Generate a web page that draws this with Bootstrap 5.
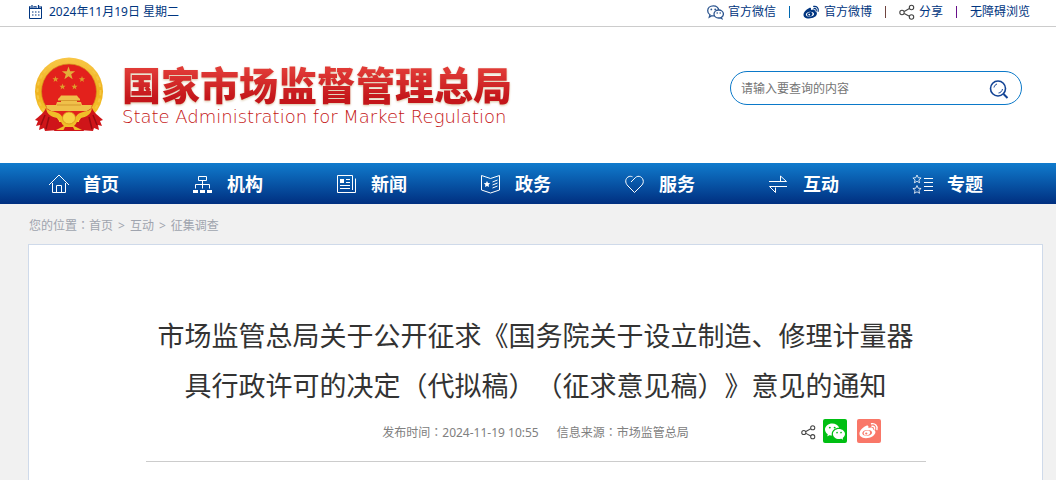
<!DOCTYPE html>
<html lang="zh-CN">
<head>
<meta charset="utf-8">
<meta name="viewport" content="width=device-width, initial-scale=1">
<title>国家市场监督管理总局</title>
<link rel="stylesheet" href="https://cdn.jsdelivr.net/npm/bootstrap@5.3.0/dist/css/bootstrap.min.css">
<style>
  :root { --navy: #003580; --line-blue: #0b79c9; }
  body { font: 12px/24px "Noto Sans", "Noto Sans CJK SC", sans-serif; color: #333; background: #f1f1f1; text-spacing-trim: space-all; }
  a { color: inherit; text-decoration: none; }
  svg { display: block; flex: none; }
  .mid-punct { font-family: "Noto Sans CJK TC", sans-serif; line-height: 1; }
  .site-wrap { padding-left: 28px; padding-right: 13px; }
  .top-strip { color: var(--navy); border-bottom: 1px solid #ccc; padding-bottom: 2px; }
  .today { gap: 7px; }
  .top-links { padding-right: 13px; gap: 13px; }
  .vbar { width: 1px; height: 12px; background: #0068b0; }
  .vbar-b { background: #70453f; }
  .vbar-c { background: #68108a; }
  .masthead { height: 136px; padding-left: 34px; padding-right: 34px; }
  .brand { gap: 18px; }
  .brand-cn { font: 900 39px/44px "Noto Sans CJK SC", sans-serif; background: linear-gradient(#e03a36 20%, #c4161a 85%); -webkit-background-clip: text; background-clip: text; color: transparent; filter: drop-shadow(0 1px 1px #d9c3a2); }
  .brand-en { font: 200 18px/24px "DejaVu Sans", sans-serif; color: #c41414; }
  .search-box { width: 292px; height: 34px; border: 1px solid var(--line-blue); border-radius: 17px; padding: 0 12px 0 10px; margin-bottom: 14px; }
  .search-box input { border: 0; outline: 0; background: none; padding: 2px 0 0; min-width: 0; color: #555; }
  .search-box input::placeholder { color: #757575; }
  .search-box button { border: 0; background: none; padding: 2px 0 0; }
  .main-nav { background: linear-gradient(#107bcd, #002f80); height: 41px; padding-left: 48px; }
  .main-nav a { flex: 1 1 0; gap: 13px; color: #fff; font: 700 18px/41px "Noto Sans CJK SC", sans-serif; }
  .main-nav svg, .line-art { fill: none; stroke: currentColor; }
  .crumbs { color: #9fa4ae; padding: 10px 0 6px 1px; gap: 5px; }
  .article-box { border: 1px solid #cfdaea; background: #fff; padding-top: 66px; min-height: 240px; }
  .article-inner { max-width: 780px; margin: 0 auto; }
  .article-inner h1 { font-size: 27px; line-height: 50px; font-weight: 400; color: #333; margin: 0 0 8px; }
  .meta-row { display: grid; grid-template-columns: 1fr auto 1fr; color: #808080; border-bottom: 1px solid #ccc; padding-bottom: 18px; }
  .meta-info { grid-column: 2; gap: 18px; padding-top: 4px; line-height: 20px; }
  .share-set { padding-right: 45px; gap: 10px; }
  .share-plain { margin-right: -3px; padding-top: 2px; }
  .share-tile { width: 24px; height: 24px; border-radius: 2px; color: #fff; }
  .tile-wechat { background: #00bf13; }
  .tile-weibo { background: #f97768; }
</style>
</head>
<body>
<svg width="0" height="0" class="position-absolute" aria-hidden="true">
  <symbol id="wechat" viewBox="0 0 16 16"><path d="M11.176 14.429c-2.665 0-4.826-1.8-4.826-4.018 0-2.22 2.159-4.02 4.824-4.02S16 8.191 16 10.411c0 1.21-.65 2.301-1.666 3.036a.32.32 0 0 0-.12.366l.218.81a.6.6 0 0 1 .029.117.166.166 0 0 1-.162.162.2.2 0 0 1-.092-.03l-1.057-.61a.5.5 0 0 0-.256-.074.5.5 0 0 0-.142.021 5.7 5.7 0 0 1-1.576.22M9.064 9.542a.647.647 0 1 0 .557-1 .645.645 0 0 0-.646.647.6.6 0 0 0 .09.353Zm3.232.001a.646.646 0 1 0 .546-1 .645.645 0 0 0-.644.644.63.63 0 0 0 .098.356"/><path d="M0 6.826c0 1.455.781 2.765 2.001 3.656a.385.385 0 0 1 .143.439l-.161.6-.1.373a.5.5 0 0 0-.032.14.19.19 0 0 0 .193.193q.06 0 .111-.029l1.268-.733a.6.6 0 0 1 .308-.088q.088 0 .171.025a6.8 6.8 0 0 0 1.625.26 4.5 4.5 0 0 1-.177-1.251c0-2.936 2.785-5.02 5.824-5.02l.15.002C10.587 3.429 8.392 2 5.796 2 2.596 2 0 4.16 0 6.826m4.632-1.555a.77.77 0 1 1-1.54 0 .77.77 0 0 1 1.54 0m3.875 0a.77.77 0 1 1-1.54 0 .77.77 0 0 1 1.54 0"/></symbol>
  <symbol id="weibo" viewBox="0 0 18 16">
    <path fill="currentColor" fill-rule="evenodd" d="M6.6 3.2C8 2.6 8.900 3.400 8.400 5.300c2-.9 4.500-.9 4.300 1.400 3.300.8 2.400 4.400-.7 6.200-3.300 2-8.300 2.200-10.700-.1C-.9 10.400 1.100 5.700 6.600 3.200ZM7.200 7.200C4.800 7.400 2.800 8.800 3 10.300s2.200 2.200 4.600 2 4.300-1.500 4.100-3-2.300-2.300-4.500-2.100Z"/>
    <path fill="currentColor" fill-rule="evenodd" d="M7.200 7.600c-2 .2-3.200 1.400-3 2.700s1.800 1.900 3.400 1.600 2.600-1.500 2.400-2.700-1.300-1.800-2.800-1.600ZM6.500 9.300a1 .9 0 1 0 .1 1.800 1 .9 0 0 0-.1-1.800Z"/>
    <path fill="none" stroke="currentColor" stroke-width="1.300" stroke-linecap="round" d="M11.300 1.500c3-.7 5.700 1.800 4.800 5.200M11.700 3.700c1.600-.3 2.700.8 2.300 2.500"/>
  </symbol>
  <symbol id="share" viewBox="0 0 16 16"><g fill="none" stroke="#444" stroke-width="1.100"><circle cx="3" cy="8.500" r="2.200"/><circle cx="12.500" cy="3.500" r="2.200"/><circle cx="12.500" cy="13" r="2.200"/><path d="M5.200 7.500l5.200-3M5.200 9.500l5.200 2.700"/></g></symbol>
</svg>

<div class="bg-white">
  <div class="top-strip site-wrap d-flex justify-content-between">
    <div class="today d-flex align-items-center">
      <svg width="14" height="16" class="line-art" viewBox="0 0 14 16"><path d="M1.500 2.500v12h12v-12M1 4.500h13" /><path d="M1 3h2M5 3h4M11 3h2.500" /><path d="M4 1v3M10.500 1v3M7 2v1" stroke-width="1.200"/><path d="M4 8h8M4 11h8" stroke-dasharray="1.500 1.500"/></svg>
      <span>2024年11月19日 星期二</span>
    </div>
    <div class="top-links d-flex align-items-center">
      <a href="#" class="d-flex align-items-center gap-1">
        <svg width="17" height="16" viewBox="0 0 17 16"><g fill="#fff" stroke="#2d5690" stroke-width="1.300"><path d="M3 10.800l-.7 2.400 2.500-1.400c5 .8 7.600-1.800 7.200-5C11.500 3.500 9 1.800 6.300 1.800 3 1.800.7 4 .7 6.800c0 1.700.9 3.200 2.300 4Z"/><path d="M14.500 13.200c1.300-.8 1.900-2 1.900-3.200 0-2.300-2.200-4-4.700-4S7 7.700 7 10s2 4 4.700 4c.5 0 1 0 1.500-.2l1.700.9Z"/></g><g fill="#2d5690"><circle cx="4.300" cy="5.400" r=".9"/><circle cx="8.200" cy="5.400" r=".9"/><circle cx="10.200" cy="9" r=".8"/><circle cx="13.200" cy="9" r=".8"/></g></svg>
        官方微信</a>
      <span class="vbar"></span>
      <a href="#" class="d-flex align-items-center gap-1"><svg width="17" height="15"><use href="#weibo"/></svg>官方微博</a>
      <span class="vbar vbar-b"></span>
      <a href="#" class="d-flex align-items-center gap-1"><svg width="16" height="16"><use href="#share"/></svg>分享</a>
      <span class="vbar vbar-c"></span>
      <a href="#">无障碍浏览</a>
    </div>
  </div>

  <header class="masthead d-flex align-items-center justify-content-between">
    <a href="#" class="brand d-flex align-items-center">
      <svg width="70" height="76" viewBox="0 0 70 76">
        <defs><linearGradient id="gold" x2="0" y2="1"><stop stop-color="#f9c648"/><stop offset=".5" stop-color="#eeb21d"/><stop offset="1" stop-color="#f8cf36"/></linearGradient></defs>
        <circle cx="35" cy="34.500" r="34" fill="url(#gold)"/>
        <circle cx="35" cy="34.500" r="31.500" fill="none" stroke="#f5c640" stroke-width="2" stroke-dasharray="4 3"/>
        <circle cx="35" cy="34.500" r="27.500" fill="#e3211c" stroke="#d2941c" stroke-width=".7"/>
        <path fill="#e2b03a" d="M34.500 9.500l1.700 4.700 5 .1-4 3 1.400 4.900-4.100-2.900-4.100 2.900 1.400-4.900-4-3 5-.1Z"/>
        <path fill="#dd9f2b" d="M21.500 19l.8 2.200 2.300.1-1.800 1.400.6 2.200-1.900-1.300-1.900 1.300.6-2.200-1.800-1.400 2.300-.1ZM48 19l.8 2.200 2.300.1-1.800 1.400.6 2.200-1.900-1.300-1.900 1.300.6-2.200-1.800-1.400 2.300-.1ZM28.500 26.500l.8 2.200 2.300.1-1.800 1.400.6 2.200-1.900-1.300-1.900 1.300.6-2.200-1.800-1.400 2.300-.1ZM40.500 26.500l.8 2.200 2.300.1-1.800 1.400.6 2.200-1.900-1.300-1.900 1.300.6-2.200-1.800-1.400 2.300-.1Z"/>
        <path fill="#efc04a" d="M26 40l1-1.500h16l1 1.500 2 2v1.500H24V42ZM27 43h16v2H27ZM23 45h24l1 3h10l-2 6H14l-2-6h10Z"/>
        <path stroke="#ca8820" stroke-width=".7" d="M24 43.500h22M23 48h24"/>
        <path fill="#cf1519" d="M12 51c-2 5-7 8-11 12l3 1-2 5 4-1-1 5 5-2 1 3 14-1V64l-6-9ZM58 51c2 5 7 8 11 12l-3 1 2 5-4-1 1 5-5-2-1 3-14-1V64l6-9Z"/>
        <path fill="none" stroke="#980b10" stroke-width="1.500" d="M11 58l-4 10M15 60l-3 12M59 58l4 10M55 60l3 12"/>
        <path fill="#cf1519" d="M23 65h24l3 9H20Z"/>
        <path fill="#f0bd28" d="M12 51c4 4 8 3 12 5 3 1 4 4 5 5l3-5h6l3 5c1-1 2-4 5-5 4-2 8-1 12-5-1 7-6 9-11 10-4 1-4 6-7 8l8 4H22l8-4c-3-2-3-7-7-8-5-1-10-3-11-10Z"/>
        <ellipse cx="35" cy="61" rx="6.500" ry="6" fill="#f8d244" stroke="#d8961a" stroke-width=".8"/>
        <path fill="#cf1519" d="M29 74l2-4h8l2 4Z"/>
      </svg>
      <span class="d-flex flex-column"><span class="brand-cn">国家市场监督管理总局</span><span class="brand-en">State Administration for Market Regulation</span></span>
    </a>
    <form class="search-box d-flex align-items-center">
      <input type="search" class="flex-fill" placeholder="请输入要查询的内容" aria-label="请输入要查询的内容">
      <button type="button" aria-label="搜索"><svg width="20" height="20" viewBox="0 0 20 20" fill="none" stroke="#124395"><circle cx="9" cy="9.500" r="7.500" stroke-width="1.600"/><path d="M14.500 15l4 4" stroke-width="2"/><path d="M5 8.500c.5-2 1.500-3 3-3.500M9.500 14c2-.3 3.500-1.500 4-4"/></svg></button>
    </form>
  </header>
</div>

<nav class="main-nav d-flex">
  <a href="#" class="d-flex align-items-center"><svg width="22" height="20" viewBox="0 0 22 20"><path d="M1 11L11 1l10 10M4.500 9v9.500h13V9M8.500 18.500v-7h5v7"/></svg>首页</a>
  <a href="#" class="d-flex align-items-center"><svg width="22" height="20" viewBox="0 0 22 20"><path d="M6.500 2.500h8v4h-8ZM10.500 6.500v8M3.500 14.500v-4h14v4"/><path d="M1 17.500h5M8 17.500h5M15 17.500h5" stroke-width="3"/></svg>机构</a>
  <a href="#" class="d-flex align-items-center"><svg width="22" height="20" viewBox="0 0 22 20"><path d="M16.500 16V1.500h-15v17h18V4.500M4 11.500h10M4 14.500h10M10 5.500h4M10 8.500h4"/><path fill="#fff" stroke="none" d="M4 5h4v4H4Z"/></svg>新闻</a>
  <a href="#" class="d-flex align-items-center"><svg width="22" height="20" viewBox="0 0 22 20"><path d="M1.500 1.500l9 3 9-3V16l-9 3-9-3ZM12.500 8l5-2M12.500 11l5-2M12.500 14l5-2"/><path fill="#fff" stroke="none" d="M7 7l1 2 2.200.3-1.600 1.500.4 2.200-2-1-2 1 .4-2.200-1.600-1.500L6 9Z"/></svg>政务</a>
  <a href="#" class="d-flex align-items-center"><svg width="22" height="20" viewBox="0 0 22 20"><path d="M7 8l4.300-4.300c3.200-3.200 8-.5 8 3.800 0 2-1 3.300-2.300 4.500L10.500 18.500 4 12C.5 8.500 1.500 4.500 4 3c1.600-1 3.200-.8 4.500-.2"/></svg>服务</a>
  <a href="#" class="d-flex align-items-center"><svg width="22" height="20" viewBox="0 0 22 20"><path d="M1 7.500h17.500l-6-5.500v5M19 12.500H1.500l6 6v-5"/></svg>互动</a>
  <a href="#" class="d-flex align-items-center"><svg width="22" height="20" viewBox="0 0 22 20"><path d="M12 4.500h9M12 8.500h9M12 12.500h9M12 16.500h9"/><path stroke-width=".8" d="M5 1l1.200 2.700 2.900.3-2.200 1.900.7 2.900L5 7.300 2.400 8.800l.7-2.900L.9 4l2.900-.3ZM5 11.500l1.200 2.700 2.900.3-2.200 1.900.7 2.900L5 17.800l-2.600 1.500.7-2.900-2.200-1.900 2.900-.3Z"/></svg>专题</a>
</nav>

<main class="site-wrap">
  <div class="crumbs d-flex"><span>您的位置<span class="mid-punct" lang="zh-TW">：</span><a href="#">首页</a></span><span>&gt;</span><a href="#">互动</a><span>&gt;</span><a href="#">征集调查</a></div>
  <article class="article-box">
    <div class="article-inner">
      <h1 class="text-center">市场监管总局关于公开征求《国务院关于设立制造、修理计量器具行政许可的决定（代拟稿）（征求意见稿）》意见的通知</h1>
      <div class="meta-row">
        <div class="meta-info d-flex"><span>发布时间<span class="mid-punct" lang="zh-TW">：</span>2024-11-19 10:55</span><span>信息来源<span class="mid-punct" lang="zh-TW">：</span>市场监管总局</span></div>
        <div class="share-set d-flex justify-content-end align-items-center">
          <a href="#" class="share-plain" aria-label="分享"><svg width="15" height="16"><use href="#share"/></svg></a>
          <a href="#" class="share-tile tile-wechat d-flex align-items-center justify-content-center" aria-label="微信"><svg width="20" height="20" fill="#fff"><use href="#wechat"/></svg></a>
          <a href="#" class="share-tile tile-weibo d-flex align-items-center justify-content-center" aria-label="微博"><svg width="20" height="18"><use href="#weibo"/></svg></a>
        </div>
      </div>
    </div>
  </article>
</main>
<script src="https://cdn.jsdelivr.net/npm/bootstrap@5.3.0/dist/js/bootstrap.bundle.min.js"></script>
</body>
</html>
